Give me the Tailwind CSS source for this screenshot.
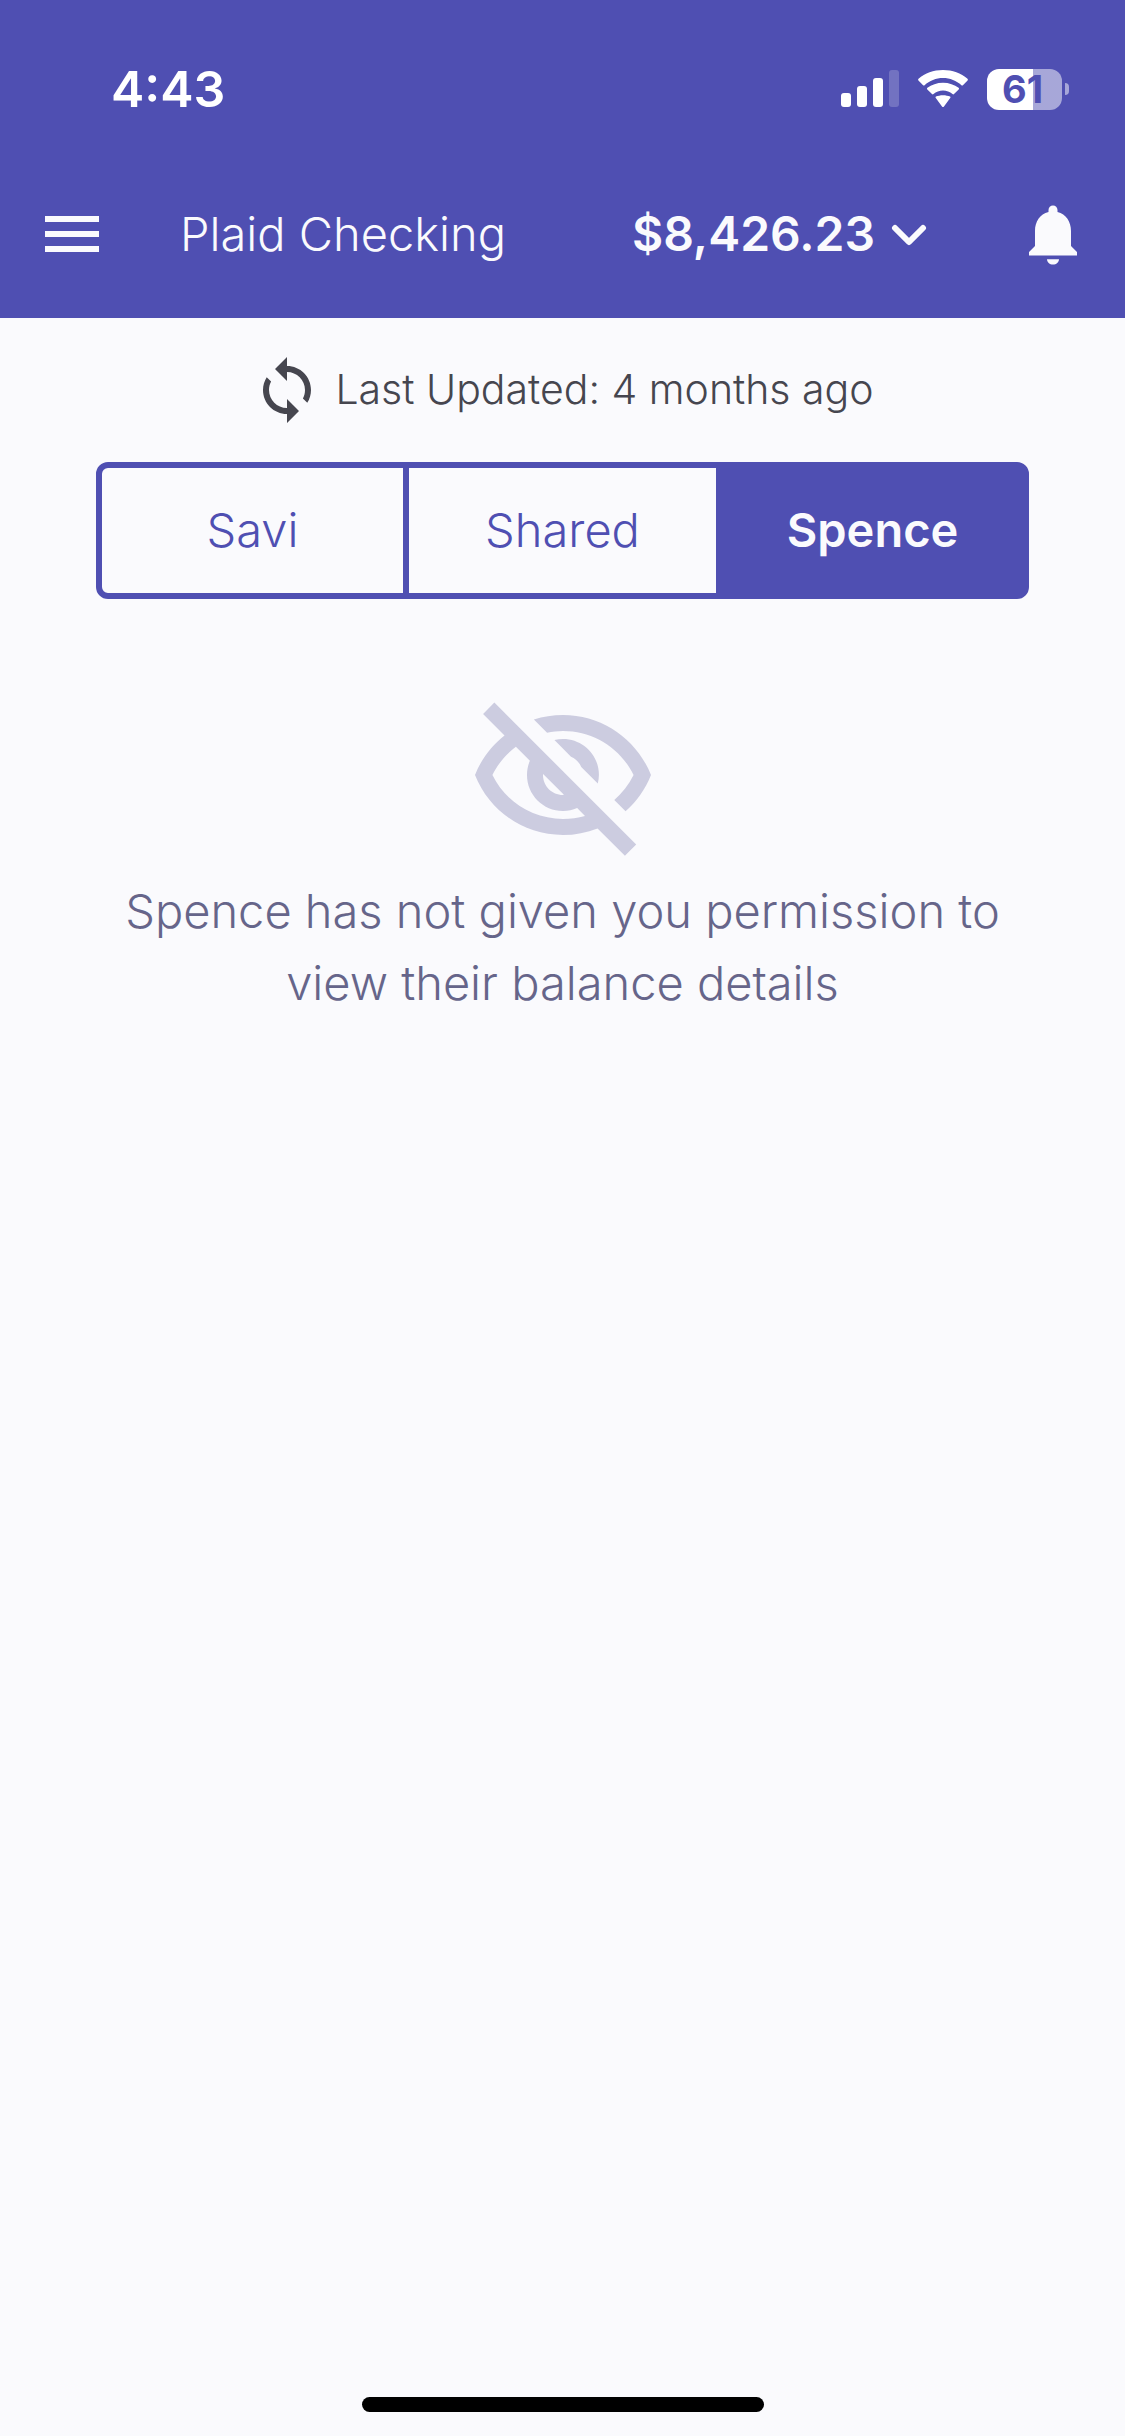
<!DOCTYPE html>
<html lang="en">
<head>
    <meta charset="UTF-8">
    <meta name="viewport" content="width=device-width, initial-scale=1.0">
    <title>Plaid Checking</title>
    <script src="https://cdn.jsdelivr.net/npm/@tailwindcss/browser@4"></script>
</head>
<body class="bg-[#fafafd] font-[Inter,sans-serif] min-h-screen flex flex-col">
    <header class="bg-[#4f4fb2] text-[#fafafd] pt-15 pb-12">
        <!-- Status bar -->
        <div class="flex items-center justify-between h-[58px] pl-[111px] pr-14 text-white">
            <span class="text-[50px] font-semibold">4:43</span>
            <div class="flex items-center">
                <svg class="w-[58px] h-[38px]" viewBox="0 0 58 38" fill="currentColor">
                    <rect x="0" y="23" width="10" height="14" rx="3"/>
                    <rect x="16" y="16" width="10" height="21" rx="3"/>
                    <rect x="32" y="8" width="10" height="29" rx="3"/>
                    <rect x="48" y="0" width="10" height="37" rx="3" opacity=".2"/>
                </svg>
                <svg class="w-[52px] h-[38px] ml-[18px]" viewBox="0 0 52 38" fill="currentColor">
                    <path d="M26 8c7 0 13.500 2.700 18.400 7.200q.8.700 1.500 0l4.700-4.800q.7-.8-.1-1.600C44 3 35.500 0 26 0S8 3 1.500 8.800q-.8.800-.1 1.600l4.700 4.800q.7.700 1.500 0C12.500 10.700 19 8 26 8z"/>
                    <path d="M26 20.500c3.600 0 6.900 1.300 9.500 3.600q.8.700 1.500 0l4.700-4.700q.8-.8-.1-1.600C37.500 14.700 32 12.700 26 12.700s-11.500 2-15.600 5.100q-.9.800-.1 1.600l4.700 4.700q.7.700 1.500 0c2.600-2.300 5.900-3.600 9.500-3.600z"/>
                    <path d="M33.200 28q.8-.8-.1-1.500C31.100 25.900 28.700 25.200 26 25.200s-5.100.7-7.100 1.300q-.9.700-.1 1.500l6.400 8.700q.8.700 1.600 0z"/>
                </svg>
                <div class="flex items-center justify-center w-[75px] h-[41px] pr-1 ml-[18px] rounded-xl bg-linear-to-r from-white from-61% to-white/50 to-61% text-[#4f4fb2] text-[38px] font-bold">61</div>
                <div class="w-1 h-3 ml-[3px] rounded-r-full bg-white/50"></div>
            </div>
        </div>
        <!-- App bar -->
        <div class="flex items-center h-18 mt-20 px-9">
            <button aria-label="Menu">
                <svg class="size-18" viewBox="0 0 24 24" fill="currentColor">
                    <path d="M3 18h18v-2H3v2zm0-5h18v-2H3v2zm0-7v2h18V6H3z"/>
                </svg>
            </button>
            <h1 class="ml-18 text-[47px] font-[350]">Plaid Checking</h1>
            <button class="flex items-center gap-4 ml-auto mr-[90px] text-5xl font-semibold">
                $8,426.23
                <svg class="w-9 h-6" viewBox="0 0 36 24" fill="none" stroke="currentColor" stroke-width="6" stroke-linecap="round" stroke-linejoin="round">
                    <path d="M4 6l14 14L32 6"/>
                </svg>
            </button>
            <button aria-label="Notifications">
                <svg class="size-18" viewBox="0 0 24 24" fill="currentColor">
                    <path d="M12 22.200c1.100 0 2-.8 2-1.800h-4c0 1 .9 1.800 2 1.800zm6-6.200v-5c0-3.070-1.640-5.640-4.500-6.320V4c0-.83-.67-1.500-1.500-1.500s-1.500.67-1.500 1.500v.68C7.630 5.360 6 7.920 6 11v5l-2 2v1.200h16v-1.200l-2-2z"/>
                </svg>
            </button>
        </div>
    </header>

    <main class="flex flex-col px-24 pt-9">
        <div class="flex items-center justify-center gap-3 text-[#46464f] text-[41px] font-[350]">
            <svg class="size-18" viewBox="0 0 24 24" fill="currentColor">
                <path d="M12 4V1L8 5l4 4V6c3.310 0 6 2.690 6 6 0 1.010-.25 1.970-.7 2.800l1.460 1.460C19.540 15.030 20 13.570 20 12c0-4.420-3.580-8-8-8zm0 14c-3.310 0-6-2.690-6-6 0-1.010.25-1.970.7-2.800L5.240 7.740C4.460 8.970 4 10.430 4 12c0 4.420 3.580 8 8 8v3l4-4-4-4v3z"/>
            </svg>
            Last Updated: 4 months ago
        </div>

        <!-- Whose balance to show -->
        <div class="grid grid-cols-3 h-[137px] mt-9 border-6 border-[#4f4fb2] rounded-xl text-[47px] text-[#4f4fb2] font-[350]">
            <button class="border-r-6 border-[#4f4fb2]">Savi</button>
            <button>Shared</button>
            <button class="border-l-6 border-[#4f4fb2] bg-[#4f4fb2] text-[#fafafd] font-semibold">Spence</button>
        </div>

        <div class="flex flex-col items-center mt-21 text-center">
            <svg class="size-48" viewBox="0 0 24 24" fill="#cccce0">
                <path d="M12 6c3.790 0 7.170 2.130 8.820 5.500-.59 1.220-1.420 2.270-2.410 3.120l1.410 1.410c1.390-1.230 2.490-2.770 3.180-4.530C21.270 7.110 17 4 12 4c-1.270 0-2.490.2-3.640.57l1.650 1.650C10.660 6.090 11.320 6 12 6zm-1.070 1.140L13 9.210c.57.25 1.030.71 1.280 1.280l2.070 2.070c.08-.34.14-.7.14-1.070C16.500 9.010 14.480 7 12 7c-.37 0-.72.05-1.070.14zM2.010 3.870l2.680 2.680C3.060 7.830 1.770 9.530 1 11.500 2.730 15.890 7 19 12 19c1.520 0 2.980-.29 4.320-.82l3.420 3.420 1.410-1.410L3.420 2.450 2.010 3.870zm7.500 7.500l2.610 2.610c-.04.01-.08.02-.12.02-1.380 0-2.500-1.120-2.500-2.500 0-.05.01-.08.01-.13zm-3.400-3.400l1.750 1.750c-.23.55-.36 1.150-.36 1.780 0 2.480 2.020 4.500 4.500 4.500.63 0 1.230-.13 1.770-.36l.98.98c-.88.24-1.800.38-2.750.38-3.790 0-7.170-2.130-8.820-5.500.7-1.430 1.720-2.610 2.930-3.530z"/>
            </svg>
            <p class="text-[47px] leading-18 font-[350] text-[#66658a]">Spence has not given you permission to view their balance details</p>
        </div>
    </main>

    <!-- Home indicator -->
    <div class="w-[402px] h-[15px] mt-auto mb-6 mx-auto rounded-full bg-black"></div>
</body>
</html>
